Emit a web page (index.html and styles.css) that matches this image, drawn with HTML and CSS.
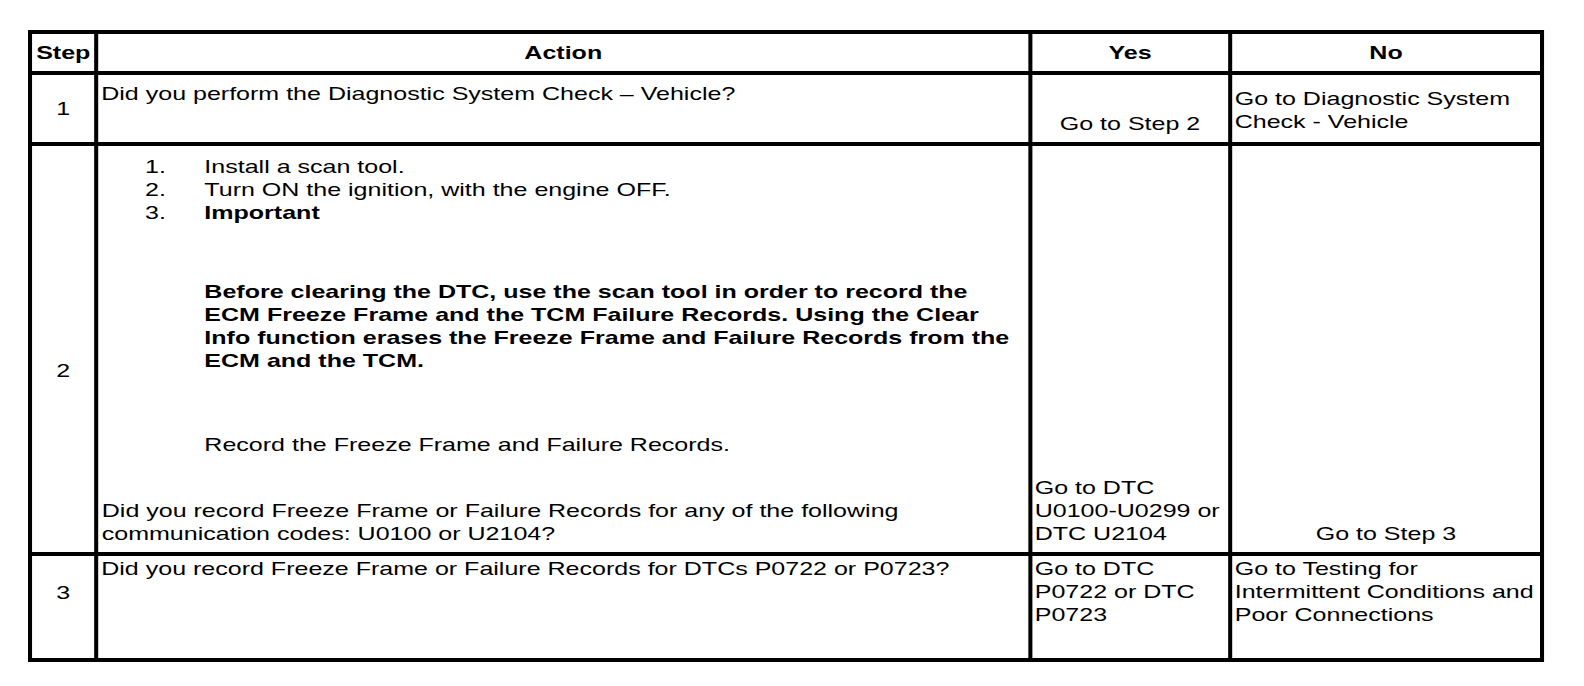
FILE: index.html
```html
<!DOCTYPE html>
<html lang="en">
<head>
<meta charset="utf-8">
<title>Diagnostic Steps</title>
<link rel="stylesheet" href="styles.css">
</head>
<body>
<div class="sheet">
  <div class="grid" role="table">
    <div class="cell head" role="columnheader">Step</div>
    <div class="cell head" role="columnheader">Action</div>
    <div class="cell head" role="columnheader">Yes</div>
    <div class="cell head" role="columnheader">No</div>

    <div class="cell num" role="cell">1</div>
    <div class="cell top first" role="cell">Did you perform the Diagnostic System Check – Vehicle?</div>
    <div class="cell bottom center" role="cell">Go to Step 2</div>
    <div class="cell bottom raised" role="cell">Go to Diagnostic System Check - Vehicle</div>

    <div class="cell num num-2" role="cell">2</div>
    <div class="cell action" role="cell">
      <ol class="steps">
        <li><span class="n">1.</span><span>Install a scan tool.</span></li>
        <li><span class="n">2.</span><span>Turn ON the ignition, with the engine OFF.</span></li>
        <li><span class="n">3.</span><strong>Important</strong></li>
      </ol>
      <p class="note">Before clearing the DTC, use the scan tool in order to record the<br>ECM Freeze Frame and the TCM Failure Records. Using the Clear<br>Info function erases the Freeze Frame and Failure Records from the<br>ECM and the TCM.</p>
      <p class="record">Record the Freeze Frame and Failure Records.</p>
      <p class="question">Did you record Freeze Frame or Failure Records for any of the following communication codes: U0100 or U2104?</p>
    </div>
    <div class="cell bottom" role="cell">Go to DTC U0100-U0299 or DTC U2104</div>
    <div class="cell bottom center" role="cell">Go to Step 3</div>

    <div class="cell num num-3" role="cell">3</div>
    <div class="cell top" role="cell">Did you record Freeze Frame or Failure Records for DTCs P0722 or P0723?</div>
    <div class="cell top" role="cell">Go to DTC P0722 or DTC P0723</div>
    <div class="cell top" role="cell">Go to Testing for Intermittent Conditions and Poor Connections</div>
  </div>
</div>
</body>
</html>
```

FILE: styles.css
```css
html, body {
  margin: 0;
  padding: 0;
  background: #ffffff;
}

body {
  font-family: "Liberation Sans", Arial, sans-serif;
  color: #000000;
}

/* The source document is rendered horizontally stretched */
.sheet {
  width: 1123px;
  margin: 30px 0 0 28px;
  transform: scaleX(1.35);
  transform-origin: 0 0;
}

.grid {
  box-sizing: border-box;
  width: 100%;
  display: grid;
  grid-template-columns: 46.26px 688.48px 145.15px 228.11px;
  grid-template-rows: 36.5px 67px 406.5px 102px;
  column-gap: 3px;
  row-gap: 4px;
  padding: 4px 3px;
  background: #000000;
}

.cell {
  background: #ffffff;
  font-size: 18.55px;
  line-height: 23px;
  padding: 1px 0 0 2px;
  display: flex;
  flex-direction: column;
  justify-content: flex-start;
  overflow: hidden;
}

.head {
  font-weight: bold;
  justify-content: center;
  align-items: center;
  padding: 0;
}

.num {
  justify-content: center;
  align-items: center;
  padding: 0;
}

.num-2 {
  padding-top: 44px;
}

.num-3 {
  padding-bottom: 30px;
}

.top {
  justify-content: flex-start;
}

.first {
  padding-top: 7px;
}

.bottom {
  justify-content: flex-end;
  padding-top: 0;
  padding-bottom: 7px;
}

.raised {
  padding-bottom: 9px;
}

.center {
  align-items: center;
  padding-left: 0;
}

.action {
  padding: 1px 0 7px 2.4px;
}

.steps {
  list-style: none;
  margin: 8px 0 0 0;
  padding: 0;
}

.steps li {
  display: flex;
  padding-left: 32px;
}

.steps .n {
  width: 44px;
  flex: none;
}

.note {
  margin: 56.5px 0 0 76px;
  font-weight: bold;
}

.record {
  margin: 61px 0 0 76px;
}

.question {
  margin: auto 0 0 0;
}
```
